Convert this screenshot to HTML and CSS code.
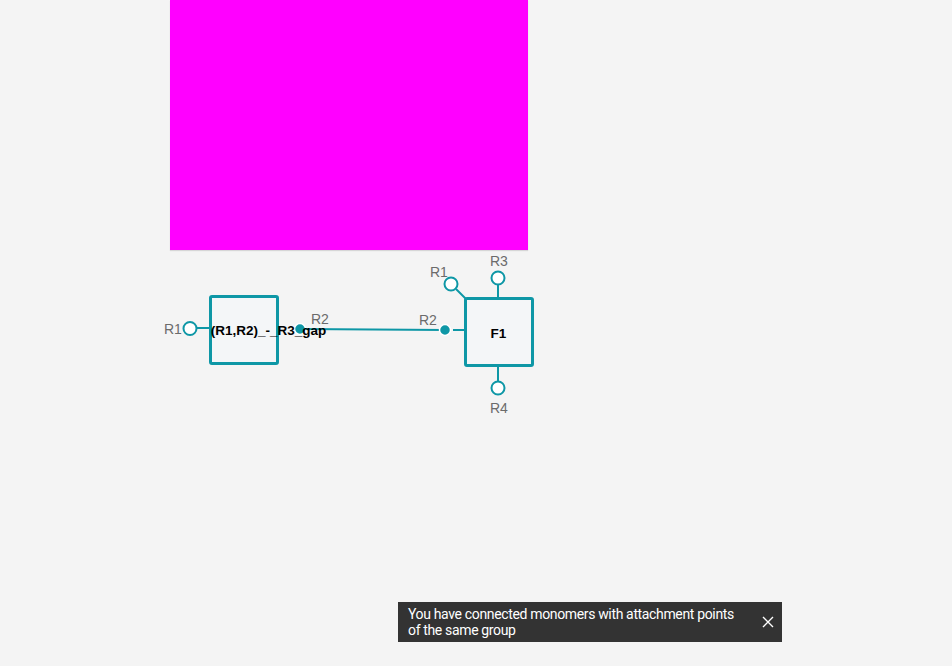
FILE: index.html
```html
<!DOCTYPE html>
<html>
<head>
<meta charset="utf-8">
<link rel="stylesheet" href="styles.css">
</head>
<body>
<div class="canvas">
  <div class="preview"></div>
  <svg class="diagram" width="952" height="666" viewBox="0 0 952 666">
    <!-- bond -->
    <line x1="300" y1="329" x2="445" y2="330" class="bond"/>
    <!-- left monomer -->
    <line x1="197" y1="328" x2="210" y2="328" class="stub"/>
    <rect x="210.5" y="296.5" width="67" height="67" class="mono"/>
    <circle cx="190" cy="328.5" r="6.5" class="ap"/>
    <circle cx="300" cy="329" r="5.5" class="ap-filled"/>
    <text x="164" y="334" class="lbl">R1</text>
    <text x="311" y="324" class="lbl">R2</text>
    <text x="268.5" y="335" class="name" text-anchor="middle">(R1,R2)_-_R3_gap</text>
    <!-- right monomer F1 -->
    <line x1="453" y1="330" x2="466" y2="330" class="stub"/>
    <line x1="456" y1="289" x2="466" y2="299" class="stub"/>
    <line x1="498" y1="285" x2="498" y2="299" class="stub"/>
    <line x1="498" y1="366" x2="498" y2="381" class="stub"/>
    <rect x="465.5" y="298.5" width="67" height="67" class="mono"/>
    <circle cx="445" cy="330" r="5.5" class="ap-filled"/>
    <circle cx="451" cy="284" r="6.5" class="ap"/>
    <circle cx="498" cy="278" r="6.5" class="ap"/>
    <circle cx="498" cy="388" r="6.5" class="ap"/>
    <text x="430" y="277" class="lbl">R1</text>
    <text x="490" y="266" class="lbl">R3</text>
    <text x="419" y="325" class="lbl">R2</text>
    <text x="490" y="413" class="lbl">R4</text>
    <text x="498.5" y="338" class="name" text-anchor="middle">F1</text>
  </svg>
  <div class="toast">
    <div class="toast-text">You have connected monomers with attachment points of the same group</div>
    <button class="toast-close" aria-label="close">
      <svg width="12" height="12" viewBox="0 0 12 12"><path d="M1 1 L11 11 M11 1 L1 11" stroke="#fff" stroke-width="1.4" fill="none"/></svg>
    </button>
  </div>
</div>
</body>
</html>
```
FILE: styles.css
```css
html, body {
  margin: 0;
  padding: 0;
  background: #f4f4f4;
  font-family: Roboto, "Liberation Sans", sans-serif;
}
.canvas {
  position: relative;
  width: 952px;
  height: 666px;
  overflow: hidden;
}
.preview {
  position: absolute;
  left: 170px;
  top: 0;
  width: 358px;
  height: 250px;
  background: #ff00ff;
  box-shadow: 0 1px 1px rgba(0,0,0,0.12);
}
.diagram {
  position: absolute;
  left: 0;
  top: 0;
}
.bond {
  stroke: #0e97a6;
  stroke-width: 2;
}
.stub {
  stroke: #0e97a6;
  stroke-width: 2;
}
.mono {
  fill: #f4f6f8;
  stroke: #0e97a6;
  stroke-width: 3;
  rx: 1.5;
}
.ap {
  fill: #ffffff;
  stroke: #0e97a6;
  stroke-width: 2;
}
.ap-filled {
  fill: #0e97a6;
  stroke: #ffffff;
  stroke-width: 1.5;
}
.lbl {
  font-family: "Liberation Sans", Arial, sans-serif;
  font-size: 14px;
  fill: #6b6b6b;
}
.name {
  font-family: "Liberation Sans", Arial, sans-serif;
  font-size: 13.5px;
  font-weight: 700;
  fill: #000;
}
.toast {
  position: absolute;
  left: 398px;
  top: 602px;
  width: 384px;
  height: 40px;
  box-sizing: border-box;
  background: #333333;
  display: flex;
  align-items: center;
  padding: 0 8px 0 10px;
  gap: 14px;
}
.toast-text {
  flex: 1;
  color: #ffffff;
  font-size: 14px;
  line-height: 16px;
  letter-spacing: -0.35px;
}
.toast-close {
  background: none;
  border: 0;
  padding: 0;
  width: 12px;
  height: 16px;
  display: flex;
  align-items: center;
  justify-content: center;
  cursor: pointer;
}
```
